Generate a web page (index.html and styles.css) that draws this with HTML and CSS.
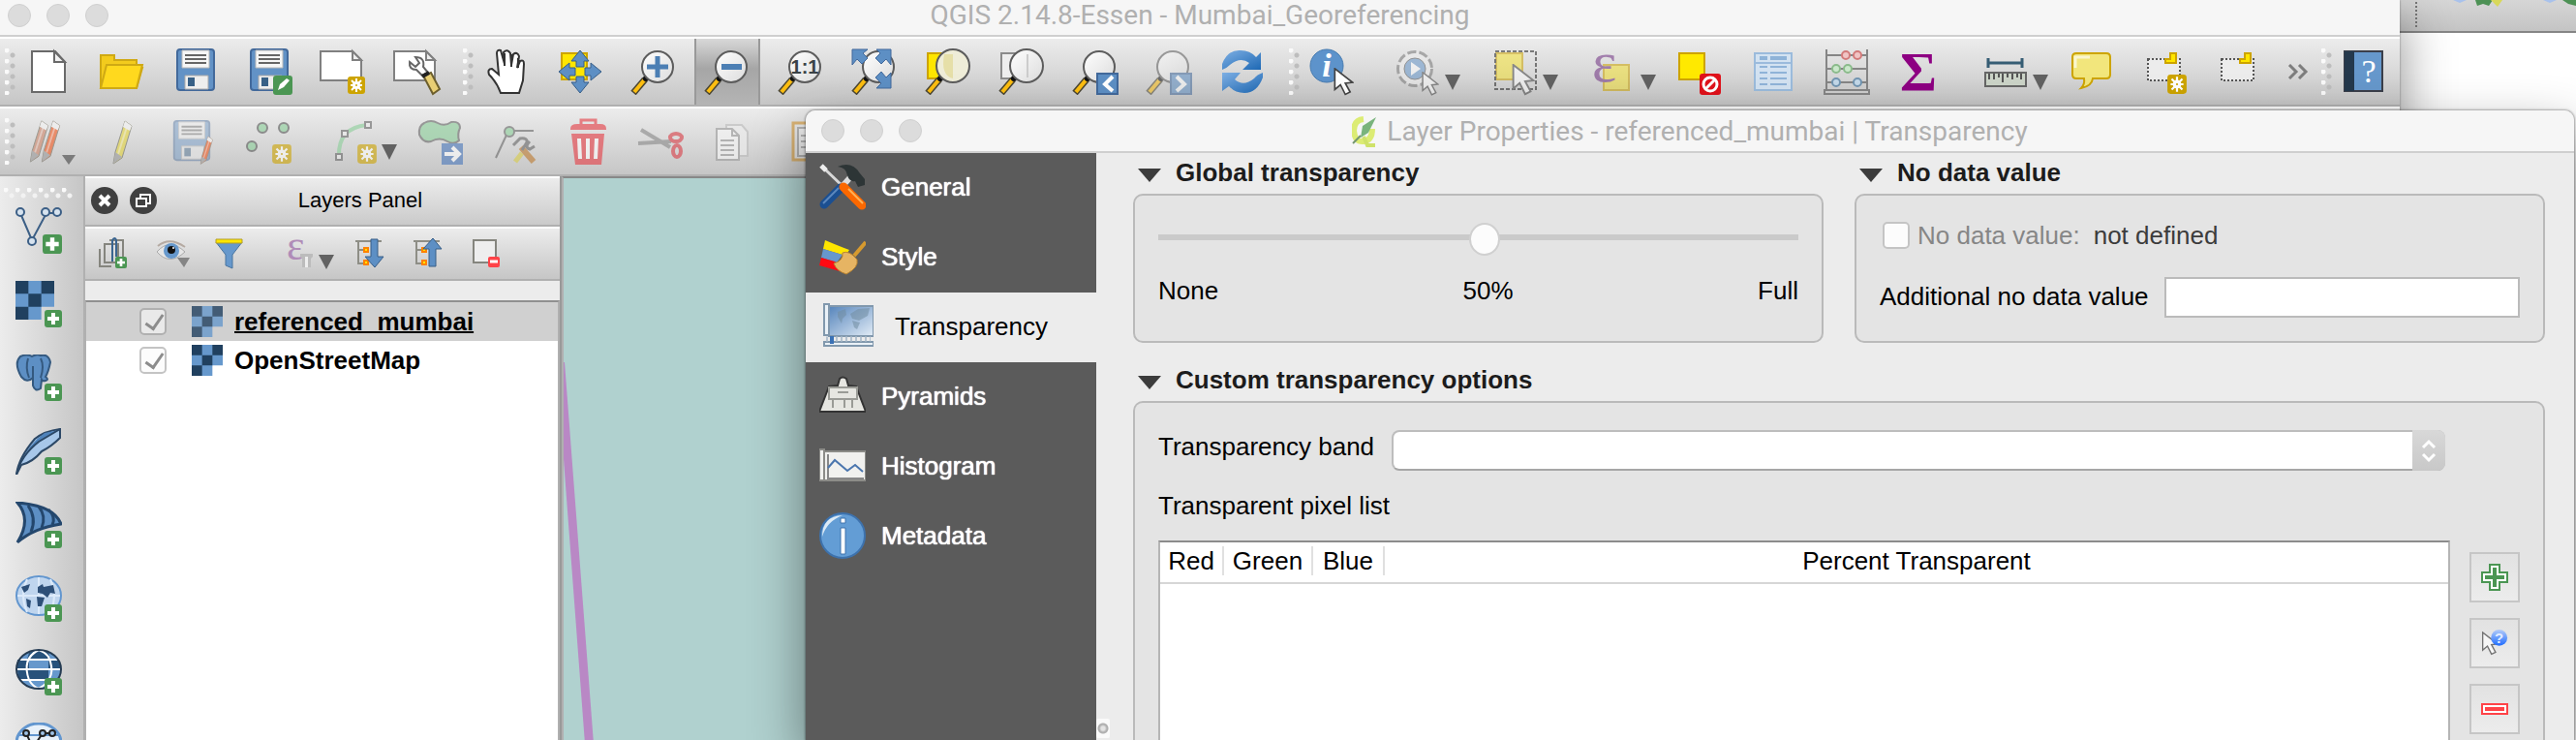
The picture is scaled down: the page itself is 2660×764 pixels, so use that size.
FILE: index.html
```html
<!DOCTYPE html>
<html lang="en">
<head>
<meta charset="utf-8">
<title>QGIS 2.14.8-Essen - Mumbai_Georeferencing</title>
<link rel="stylesheet" href="styles.css">
</head>
<body>
<svg class="defs" aria-hidden="true">
  <defs>
    <linearGradient id="lens" x1="0" y1="0" x2="1" y2="1"><stop offset="0" stop-color="#fff"/><stop offset="1" stop-color="#dcdcdc"/></linearGradient>
    <linearGradient id="blueball" x1="0" y1="0" x2="0" y2="1"><stop offset="0" stop-color="#b4ccf8"/><stop offset="1" stop-color="#1e6cff"/></linearGradient>
    <linearGradient id="sync" x1="0" y1="0" x2="1" y2="1"><stop offset="0" stop-color="#7fb0e4"/><stop offset="1" stop-color="#1d68b4"/></linearGradient>
    <linearGradient id="sea" x1="0" y1="0" x2="1" y2="1"><stop offset="0" stop-color="#5584bb"/><stop offset="1" stop-color="#e3edf7"/></linearGradient>
    <symbol id="handle" viewBox="0 0 48 48">
      <path d="M15 32L3 46" stroke="#4b4632" stroke-width="7"/><path d="M14 33L4 45" stroke="#fdbe10" stroke-width="4"/><circle cx="16" cy="31" r="3" fill="#111"/>
    </symbol>
    <symbol id="glass" viewBox="0 0 48 48">
      <use href="#handle"/><circle cx="28" cy="19" r="16" fill="url(#lens)" stroke="#5c5c5c" stroke-width="2"/>
    </symbol>
    <symbol id="plus" viewBox="0 0 18 18"><rect width="18" height="18" rx="3" fill="#4b9653"/><path d="M9 3v12M3 9h12" stroke="#fff" stroke-width="4"/></symbol>
    <symbol id="star" viewBox="0 0 20 20"><rect x="1" y="1" width="18" height="18" rx="3" fill="#cda400"/><path d="M10 3v14M4 10h12M5 5l10 10M15 5L5 15" stroke="#fff" stroke-width="2"/><circle cx="10" cy="10" r="4" fill="#fff"/><circle cx="10" cy="10" r="1" fill="#cda400"/></symbol>
    <symbol id="pencil" viewBox="0 0 20 48"><path d="M1 47L3 35L13 3L20 8L10 41Z" fill="currentColor" stroke="#6b6b5c" stroke-width="1"/><path d="M6 37L16 6" stroke="#fff" stroke-opacity=".45" stroke-width="2"/><path d="M13 3L20 8L18 13L11 9Z" fill="#f4f4f4"/><path d="M1 47L3 35L10 40Z" fill="#9b9b9b"/></symbol>
    <symbol id="disk" viewBox="0 0 48 48"><rect x="5" y="1" width="38" height="42" rx="3" fill="#6292c6" stroke="#42699b" stroke-width="2"/><path d="M10 2h28v18H10z" fill="#f6f6f6" stroke="#b9b9b9"/><path d="M13 7h22M13 11h22M13 15h22" stroke="#666" stroke-width="2"/><path d="M13 28h24v14H13z" fill="#eee" stroke="#aaa"/><path d="M16 30h7v9h-7z" fill="#386086"/></symbol>
    <symbol id="raster" viewBox="0 0 36 36"><path fill="#6698cc" d="M0 0h36v24H24v12H0z"/><path fill="#20405f" d="M0 0h12v12H0zM24 0h12v12H24zM12 12h12v12H12zM0 24h12v12H0z"/></symbol>
    <symbol id="cursor" viewBox="0 0 24 36"><path d="M1 1L1 27L8 21L14 33L20 30L14 19L23 18Z" fill="#fff" stroke="#444" stroke-width="2"/></symbol>
    <symbol id="tri" viewBox="0 0 16 16"><path d="M0 0h16L8 16z" fill="#626262"/></symbol>
  </defs>
</svg>

<div class="desktop">
  <div class="backdrop">
    <svg width="182" height="8"><path d="M55 0h14l-7 3z" fill="#a9c2ec"/><path d="M78 0h18l-4 6l-6-2l-6 2z" fill="#4d9155"/><path d="M94 0h12l-5 7z" fill="#d8d85a"/><path d="M148 0h14l-7 3z" fill="#a9c2ec"/><path d="M168 0h14v6l-8-2z" fill="#4d9155"/></svg>
  </div>

  <main class="window">
    <header class="titlebar">
      <div class="lights"><button aria-label="Close"></button><button aria-label="Minimize"></button><button aria-label="Zoom"></button></div>
      <h1 class="title">QGIS 2.14.8-Essen - Mumbai_Georeferencing</h1>
    </header>

    <nav class="toolbar" aria-label="Project and navigation">
      <span class="grip"></span>
      <div class="tools">
        <button class="tool" aria-label="New project"><svg viewBox="0 0 48 48"><path d="M7 3h24l10 11v31H7z" fill="#fff" stroke="#6a6a6a" stroke-width="2"/><path d="M30 3v11h11z" fill="#f0f0f0" stroke="#6a6a6a" stroke-width="2"/></svg></button>
        <button class="tool" aria-label="Open project"><svg viewBox="0 0 48 48"><path d="M2 41V7h14v5h23v8h6l-6 21z" fill="#f3cb1d" stroke="#cfa914" stroke-width="2"/><path d="M8 17h37l-6 24H2z" fill="#ffd91e" stroke="#cfa914" stroke-width="2"/></svg></button>
        <button class="tool" aria-label="Save project"><svg viewBox="0 0 48 48"><use href="#disk"/></svg></button>
        <button class="tool" aria-label="Save project as"><svg viewBox="0 0 48 48"><use href="#disk"/><rect x="28" y="28" width="20" height="20" rx="3" fill="#4b9653"/><path d="M33 43l2-6l7-6l3 2l-6 7z" fill="#fff"/></svg></button>
        <button class="tool" aria-label="New print composer"><svg viewBox="0 0 48 48"><path d="M1 3h33l9 9v21H1z" fill="#fff" stroke="#808080" stroke-width="2"/><path d="M34 3v9h9z" fill="#eee" stroke="#808080" stroke-width="2"/><use href="#star" x="28" y="28" width="20" height="20"/></svg></button>
        <button class="tool" aria-label="Composer manager"><svg viewBox="0 0 48 48"><path d="M1 3h33l9 9v21H1z" fill="#fff" stroke="#808080" stroke-width="2"/><path d="M34 3v9h9z" fill="#eee" stroke="#808080" stroke-width="2"/><path d="M31 28l8-3l9 17l-7 5z" fill="#e9cf74" stroke="#6d5f2d" stroke-width="2"/><path d="M30 28l-6-6q-8 0-7-8l6 5l4-4l-4-6q10 0 8 10l5 6z" fill="#fff" stroke="#666" stroke-width="2"/><path d="M30 29l7-4" stroke="#222" stroke-width="4"/></svg></button>
      </div>
      <span class="grip"></span>
      <div class="tools">
        <button class="tool" aria-label="Pan map"><svg viewBox="0 0 48 48"><path d="M18 46Q14 35 6 27Q4 21 9 21L16 27L14 5Q14 1 18 2L22 16L21 4Q25 0 28 5L29 17L31 6Q35 3 37 8L35 20L38 13Q42 11 42 16L41 33L37 46Z" fill="#fff" stroke="#333" stroke-width="2"/><path d="M22 5v13M29 6v13M36 10v10" stroke="#333" stroke-width="2"/></svg></button>
        <button class="tool" aria-label="Pan to selection"><svg viewBox="0 0 48 48"><path d="M5 5h26v27H5z" fill="#ffe600" stroke="#cda400" stroke-width="2"/><path d="M24 2l9 11h-5v6h-8v-6h-5zM24 46l9-11h-5v-6h-8v6h-5zM2 24l11-9v5h6v8h-6v5zM46 24l-11-9v5h-6v8h6v5z" fill="#5d8fc4" stroke="#385e87"/></svg></button>
        <button class="tool" aria-label="Zoom in"><svg viewBox="0 0 48 48"><use href="#glass"/><path d="M28 8v22M17 19h22" stroke="#4c7fb4" stroke-width="5"/></svg></button>
        <button class="tool active" aria-label="Zoom out" aria-pressed="true"><svg viewBox="0 0 48 48"><use href="#glass"/><path d="M18 19h21" stroke="#4c7fb4" stroke-width="6"/></svg></button>
        <button class="tool" aria-label="Zoom to native resolution"><svg viewBox="0 0 48 48"><use href="#glass"/><text x="28" y="26" text-anchor="middle" class="glyph-ratio">1:1</text></svg></button>
        <button class="tool" aria-label="Zoom full"><svg viewBox="0 0 48 48"><use href="#glass"/><path d="M1 1h16l-5 4l5 5l-6 6l-5-5l-5 6zM41 1H26l4 4l-5 5l6 6l5-5l5 6zM41 41H26l5-5l-6-6l6-6l5 6l5-5z" fill="#5d8fc4" stroke="#42699b"/></svg></button>
        <button class="tool" aria-label="Zoom to selection"><svg viewBox="0 0 48 48"><path d="M3 5h26v26H3z" fill="#ffe600" stroke="#cda400" stroke-width="2"/><use href="#handle"/><circle cx="29" cy="18" r="17" fill="#efedd8" stroke="#5c5c5c" stroke-width="2"/><path d="M20 6h9v25q-13-3-9-25z" fill="#e6dfa8"/></svg></button>
        <button class="tool" aria-label="Zoom to layer"><svg viewBox="0 0 48 48"><path d="M3 5h26v26H3z" fill="#eee" stroke="#8b8b8b" stroke-width="2"/><use href="#handle"/><circle cx="29" cy="18" r="17" fill="url(#lens)" stroke="#5c5c5c" stroke-width="2"/><path d="M30 6v24" stroke="#ccc" stroke-width="2"/></svg></button>
        <button class="tool" aria-label="Zoom last"><svg viewBox="0 0 48 48"><use href="#glass"/><path d="M26 26h21v21H26z" fill="#5d8fc4" stroke="#42699b" stroke-width="2"/><path d="M42 29l-8 8l8 7" fill="none" stroke="#fff" stroke-width="4"/></svg></button>
        <button class="tool dim" aria-label="Zoom next"><svg viewBox="0 0 48 48"><use href="#glass"/><path d="M26 26h21v21H26z" fill="#5d8fc4" stroke="#42699b" stroke-width="2"/><path d="M32 29l8 8l-8 7" fill="none" stroke="#fff" stroke-width="4"/></svg></button>
        <button class="tool" aria-label="Refresh"><svg viewBox="0 0 48 48"><path d="M3 16Q9 1 22 2Q32 2 38 9L43 4V22H24L31 15Q22 8 11 17Q7 21 3 22Z" fill="url(#sync)"/><path d="M45 30Q39 46 26 46Q16 46 10 39L3 44V25H22L16 32Q25 40 36 31Q39 27 45 25Z" fill="url(#sync)"/></svg></button>
      </div>
      <span class="grip"></span>
      <div class="tools">
        <button class="tool" aria-label="Identify features"><svg viewBox="0 0 48 48"><circle cx="18" cy="18" r="17" fill="#5d93cb" stroke="#467bb0"/><text x="18" y="29" text-anchor="middle" class="glyph-i">i</text><use href="#cursor" x="25" y="20" width="21" height="30"/></svg></button>
        <button class="tool menu" aria-label="Run feature action"><svg class="faded" viewBox="0 0 48 48"><circle cx="21" cy="21" r="17" fill="#eee" stroke="#777" stroke-width="4" stroke-dasharray="9 3"/><circle cx="21" cy="21" r="16" fill="#eee"/><circle cx="21" cy="21" r="11" fill="#6898cb" stroke="#555"/><path d="M17 14l10 7l-10 7z" fill="#fff"/><use href="#cursor" x="28" y="24" width="18" height="26"/></svg><svg class="caret" viewBox="0 0 16 16"><use href="#tri"/></svg></button>
        <button class="tool menu" aria-label="Select features"><svg class="faded" viewBox="0 0 48 48"><path d="M4 5h27v27H4z" fill="#ffe600" fill-opacity=".75" stroke="#cda400" stroke-width="2"/><path d="M3 3h42v39H3z" fill="none" stroke="#222" stroke-width="2" stroke-dasharray="4 2"/><use href="#cursor" x="18" y="16" width="28" height="34"/></svg><svg class="caret" viewBox="0 0 16 16"><use href="#tri"/></svg></button>
        <button class="tool menu" aria-label="Select by expression"><svg class="faded" viewBox="0 0 48 48"><path d="M14 17h26v26H14z" fill="#ffe600" fill-opacity=".75" stroke="#cda400" stroke-width="2"/><text x="2" y="34" class="glyph-eps">ε</text></svg><svg class="caret" viewBox="0 0 16 16"><use href="#tri"/></svg></button>
        <button class="tool" aria-label="Deselect all"><svg viewBox="0 0 48 48"><path d="M3 5h26v27H3z" fill="#ffe900" stroke="#cda400" stroke-width="2"/><rect x="24" y="26" width="22" height="22" rx="3" fill="#e0121b"/><circle cx="35" cy="37" r="7" fill="none" stroke="#fff" stroke-width="3"/><path d="M30 42L40 32" stroke="#fff" stroke-width="3"/></svg></button>
        <button class="tool" aria-label="Open attribute table"><svg viewBox="0 0 48 48"><path d="M5 5h38v38H5z" fill="#d3e2f1" stroke="#9bbbdc" stroke-width="2"/><path d="M5 15h38" stroke="#9bbbdc" stroke-width="2"/><path d="M10 10h8M21 10h17" stroke="#8fb3d8" stroke-width="4"/><path d="M10 19h8M21 19h17M10 25h8M21 25h17M10 31h8M21 31h17M10 37h8M21 37h17" stroke="#8fb3d8" stroke-width="2"/></svg></button>
        <button class="tool" aria-label="Field calculator"><svg viewBox="0 0 48 48"><path d="M3 1v42M45 1v42M3 7h42M3 21h42M3 35h42M1 43h46v4H1z" fill="none" stroke="#858585" stroke-width="2"/><g stroke-width="2"><g fill="#f0c4c4" stroke="#d27a7a"><circle cx="23" cy="7" r="4"/><circle cx="35" cy="7" r="4"/></g><g fill="#cbe8cb" stroke="#8bbb8b"><circle cx="13" cy="21" r="4"/><circle cx="25" cy="21" r="4"/></g><g fill="#c4d9e9" stroke="#7295b1"><circle cx="13" cy="35" r="4"/><circle cx="35" cy="35" r="4"/></g></g></svg></button>
        <button class="tool" aria-label="Statistical summary"><svg viewBox="0 0 48 48"><text x="22" y="44" text-anchor="middle" class="glyph-sum">Σ</text></svg></button>
        <button class="tool menu" aria-label="Measure line"><svg viewBox="0 0 48 48"><path d="M6 10v10M41 10v10M6 15h35" stroke="#365d74" stroke-width="3"/><path d="M3 25h42v14H3z" fill="#ccd4c8" stroke="#666" stroke-width="2"/><path d="M7 26v6M12 26v6M17 26v4M21 26v9M26 26v4M31 26v6M36 26v4M40 26v6" stroke="#555" stroke-width="2"/></svg><svg class="caret" viewBox="0 0 16 16"><use href="#tri"/></svg></button>
        <button class="tool" aria-label="Map tips"><svg viewBox="0 0 48 48"><path d="M8 5h31q4 0 4 4v18q0 4-4 4H25q-1 8-12 10q4-4 3-10H8q-4 0-4-4V9q0-4 4-4z" fill="#f2e67c" stroke="#cda400" stroke-width="2"/><path d="M7 20V9h15" fill="none" stroke="#faf6cf" stroke-width="3"/></svg></button>
        <button class="tool" aria-label="New bookmark"><svg viewBox="0 0 48 48"><path d="M6 11h33v22H6z" fill="#ececec" stroke="#555" stroke-width="2" stroke-dasharray="2 2"/><path d="M24 11h5V5h6v10h-11z" fill="#ffe600" stroke="#cda400" stroke-width="2"/><use href="#star" x="25" y="26" width="22" height="22"/></svg></button>
        <button class="tool" aria-label="Show bookmarks"><svg viewBox="0 0 48 48"><path d="M6 11h33v22H6z" fill="#ececec" stroke="#555" stroke-width="2" stroke-dasharray="2 2"/><path d="M25 11h5V5h6v10h-11z" fill="#ffe600" stroke="#cda400" stroke-width="2"/></svg></button>
        <button class="more" aria-label="More tools"><svg viewBox="0 0 22 16"><path d="M2 1l7 7l-7 7M12 1l7 7l-7 7" fill="none" stroke="#7d7d7d" stroke-width="3"/></svg></button>
      </div>
      <span class="grip tight"></span>
      <div class="tools">
        <button class="tool" aria-label="Help"><svg viewBox="0 0 48 48"><path d="M3 3h39v41H3z" fill="#6698cc" stroke="#3b3f4a" stroke-width="2"/><path d="M3 3h10v41H3z" fill="#24384c"/><text x="28" y="35" text-anchor="middle" class="glyph-help">?</text></svg></button>
      </div>
    </nav>

    <nav class="toolbar" aria-label="Digitizing">
      <span class="grip"></span>
      <div class="tools">
        <button class="tool" aria-label="Current edits"><svg class="dimmed" viewBox="0 0 48 48"><use href="#pencil" x="3" width="22" height="46" color="#cc8468"/><use href="#pencil" x="14" width="24" height="46" color="#f0571e"/><path d="M38 38h14l-7 10z" fill="#444"/></svg></button>
        <button class="tool" aria-label="Toggle editing"><svg class="dimmed" viewBox="0 0 48 48"><use href="#pencil" x="12" width="24" height="48" color="#e5d53c"/></svg></button>
        <button class="tool" aria-label="Save layer edits"><svg class="dimmed" viewBox="0 0 48 48"><g opacity=".7"><use href="#disk" x="-3" y="2" width="46" height="46"/></g><use href="#pencil" x="26" y="17" width="18" height="31" color="#f0571e"/></svg></button>
        <button class="tool" aria-label="Add feature"><svg class="dimmed" viewBox="0 0 48 48"><g fill="#8bcf99" stroke="#555" stroke-width="2"><circle cx="17" cy="10" r="5"/><circle cx="39" cy="10" r="5"/><circle cx="6" cy="29" r="5"/></g><use href="#star" x="26" y="26" width="22" height="22"/></svg></button>
        <button class="tool menu" aria-label="Add circular string"><svg class="dimmed" viewBox="0 0 48 48"><path d="M8 39Q7 10 37 7" fill="none" stroke="#8bcf99" stroke-width="4"/><g fill="#eee" stroke="#666" stroke-width="2"><path d="M5 37h6v6H5zM11 13h6v6h-6zM35 4h6v6h-6z"/></g><use href="#star" x="26" y="26" width="22" height="22"/></svg><svg class="caret" viewBox="0 0 16 16"><use href="#tri"/></svg></button>
        <button class="tool" aria-label="Move feature"><svg class="dimmed" viewBox="0 0 48 48"><path d="M7 5Q14 1 21 5T35 4Q44 3 44 10Q41 16 43 23Q38 28 31 24Q23 19 14 24Q6 26 2 17Q1 8 7 5Z" fill="#8bcf99" stroke="#666" stroke-width="2"/><path d="M25 26h22v22H25z" fill="#4876ba"/><path d="M28 37h14M36 30l7 7l-7 7" fill="none" stroke="#fff" stroke-width="4"/></svg></button>
        <button class="tool" aria-label="Node tool"><svg class="dimmed" viewBox="0 0 48 48"><path d="M5 41L18 13H44" fill="none" stroke="#666" stroke-width="2"/><circle cx="19" cy="14" r="5" fill="#8bcf99" stroke="#666" stroke-width="2"/><path d="M25 45l7-9" stroke="#d8cc48" stroke-width="5"/><path d="M31 30l13 15" stroke="#bd7a2f" stroke-width="6"/><path d="M23 28l7-7q8-1 7 4l-5 8M40 24q-6 6 0 8l5-3" fill="none" stroke="#666" stroke-width="3"/></svg></button>
        <button class="tool" aria-label="Delete selected"><svg class="dimmed" viewBox="0 0 48 48"><path d="M6 11q0-5 7-5h24q6 0 6 5v1H6z" fill="#e63a42"/><path d="M17 6V2h15v4" fill="none" stroke="#e63a42" stroke-width="3"/><path d="M7 16h34l-3 32H11z" fill="#e63a42"/><path d="M15 21l1 21M24 21v21M33 21l-1 21" stroke="#fff" stroke-width="4"/></svg></button>
        <button class="tool" aria-label="Cut features"><svg class="dimmed" viewBox="0 0 48 48"><path d="M3 12l30 18M0 26l34-2" stroke="#888" stroke-width="4"/><g fill="none" stroke="#d93c45" stroke-width="4"><ellipse cx="39" cy="20" rx="6" ry="4"/><ellipse cx="40" cy="34" rx="4" ry="6"/></g></svg></button>
        <button class="tool" aria-label="Copy features"><svg class="dimmed" viewBox="0 0 48 48"><path d="M15 7h16l6 7v25H15z" fill="#eee" stroke="#bbb" stroke-width="2"/><path d="M5 11h16l7 7v25H5z" fill="#f8f8f8" stroke="#999" stroke-width="2"/><path d="M21 11v7h7M9 23h14M9 28h14M9 33h14M9 38h14" fill="none" stroke="#999" stroke-width="2"/></svg></button>
        <button class="tool" aria-label="Paste features"><svg class="dimmed" viewBox="0 0 48 48"><path d="M8 5h34v38H8z" fill="#eee" stroke="#d6962e" stroke-width="3"/><path d="M13 10h24v29H13z" fill="#f8f8f8" stroke="#999" stroke-width="2"/><path d="M16 18h16M16 24h16M16 30h16" stroke="#999" stroke-width="2"/></svg></button>
      </div>
    </nav>

    <div class="workspace">
      <nav class="rail" aria-label="Manage layers">
        <span class="grip-wide"></span>
        <button class="rail-tool" aria-label="Add vector layer"><svg viewBox="0 0 48 48"><path d="M5 6l12 28L32 6h10" fill="none" stroke="#3c5f86" stroke-width="2"/><g fill="#d7e3ef" stroke="#3c5f86" stroke-width="2"><circle cx="5" cy="5" r="4"/><circle cx="17" cy="35" r="4"/><circle cx="31" cy="5" r="4"/><circle cx="43" cy="5" r="4"/></g><use href="#plus" x="28" y="28" width="20" height="20"/></svg></button>
        <button class="rail-tool" aria-label="Add raster layer"><svg viewBox="0 0 48 48"><use href="#raster" width="40" height="40"/><use href="#plus" x="30" y="30" width="18" height="18"/></svg></button>
        <button class="rail-tool" aria-label="Add PostGIS layer"><svg viewBox="0 0 48 48"><path d="M5 2Q12-1 17 2Q22-1 26 1Q34-1 36 8Q34 18 31 23Q35 26 31 27Q28 28 27 26L26 35Q20 39 18 32V24Q12 30 6 23Q-2 9 5 2Z" fill="#5d8fc4" stroke="#34597f" stroke-width="2"/><path d="M13 4Q10 14 14 24M18 12v14M26 4Q30 12 26 24" fill="none" stroke="#34597f" stroke-width="2"/><use href="#plus" x="30" y="30" width="18" height="18"/></svg></button>
        <button class="rail-tool" aria-label="Add SpatiaLite layer"><svg viewBox="0 0 48 48"><path d="M1 48Q3 31 20 11Q30 3 46 1V10Q37 19 27 24Q18 35 6 38Z" fill="#a7c7e9" stroke="#2c4866" stroke-width="2"/><path d="M4 38Q16 16 45 2L30 5Q14 16 4 38Z" fill="#4f83bb"/><path d="M1 48Q5 29 24 14L46 1" fill="none" stroke="#2c4866" stroke-width="2"/><use href="#plus" x="30" y="30" width="18" height="18"/></svg></button>
        <button class="rail-tool" aria-label="Add MSSQL layer"><svg viewBox="0 0 48 48"><path d="M2 1Q40 4 47 23Q19 27 2 42Q17 18 2 1Z" fill="#5d8fc4" stroke="#24476d" stroke-width="3"/><path d="M13 4Q22 17 16 31M24 5Q32 15 27 27M34 8Q42 16 38 24" fill="none" stroke="#24476d" stroke-width="3"/><use href="#plus" x="30" y="30" width="18" height="18"/></svg></button>
        <button class="rail-tool" aria-label="Add WMS layer"><svg viewBox="0 0 48 48"><ellipse cx="24" cy="21" rx="23" ry="20" fill="#bfd5ee" stroke="#6296cf" stroke-width="2"/><path d="M2 21h44M24 2v38M12 4Q4 21 12 38M36 4Q44 21 36 38" fill="none" stroke="#dceafa" stroke-width="2"/><path d="M6 12l9-3l-2 6l-4 3zM11 24l5 2l-1 8l-3-2zM23 12l5-3l1 3l10-2l2 9l-5-1l-3 5l-5-4l-5-1zM22 22l8 1l-3 9h-4z" fill="#2d4f78"/><use href="#plus" x="30" y="30" width="18" height="18"/></svg></button>
        <button class="rail-tool" aria-label="Add WCS layer"><svg viewBox="0 0 48 48"><ellipse cx="24" cy="21" rx="23" ry="20" fill="#6698cc"/><path d="M14 4Q24-2 34 4L36 11H12zM2 22h12v10H4zM14 22h20v10H14zM2 11h12v10H1zM34 11h11l2 10H34z" fill="#28527b"/><path d="M1 21h46M4 11h40M4 32h40M24 1Q6 10 14 32Q18 39 24 41Q44 30 34 8Q30 3 24 1" fill="none" stroke="#fff" stroke-width="2"/><ellipse cx="24" cy="21" rx="23" ry="20" fill="none" stroke="#263c53" stroke-width="2"/><use href="#plus" x="30" y="30" width="18" height="18"/></svg></button>
        <button class="rail-tool" aria-label="Add WFS layer"><svg viewBox="0 0 48 48"><ellipse cx="24" cy="21" rx="23" ry="20" fill="#e8f1fa" stroke="#6296cf" stroke-width="3"/><path d="M2 13h44" stroke="#6296cf" stroke-width="2"/><path d="M11 11l7 15L28 11h11" fill="none" stroke="#222" stroke-width="2"/><g fill="#9fc3e8" stroke="#222" stroke-width="2"><circle cx="11" cy="11" r="3"/><circle cx="28" cy="11" r="3"/><circle cx="38" cy="11" r="3"/></g></svg></button>
      </nav>

      <section class="layers" aria-labelledby="layers-title">
        <header class="layers-head">
          <button class="round" aria-label="Close panel"><svg viewBox="0 0 28 28"><circle cx="14" cy="14" r="14" fill="#404040"/><path d="M9 9l10 10M19 9L9 19" stroke="#fff" stroke-width="4"/></svg></button>
          <button class="round" aria-label="Float panel"><svg viewBox="0 0 28 28"><circle cx="14" cy="14" r="14" fill="#404040"/><path d="M11 11V8h10v9h-3M7 12h10v8H7z" fill="none" stroke="#fff" stroke-width="2"/></svg></button>
          <h2 id="layers-title">Layers Panel</h2>
        </header>
        <div class="layers-tools">
          <button aria-label="Add group"><svg viewBox="0 0 32 32"><path d="M2 12v18h12M7 7h14v19H7zM12 3h14v20" fill="none" stroke="#85857e" stroke-width="2"/><path d="M15 25V3q3-4 4 0v17" fill="none" stroke="#3b6590" stroke-width="2"/><use href="#plus" x="18" y="20" width="12" height="12"/></svg></button>
          <button aria-label="Manage visibility"><svg viewBox="0 0 32 32"><path d="M1 15Q14 0 30 15Q14 30 1 15Z" fill="#e6e6e6" stroke="#aaa"/><path d="M2 9Q14-1 30 10" fill="none" stroke="#b5aaa2" stroke-width="2"/><circle cx="16" cy="14" r="8" fill="#6698cc"/><circle cx="16" cy="13" r="4" fill="#111"/><circle cx="18" cy="11" r="1" fill="#fff"/><path d="M22 21h13l-6 10z" fill="#858585"/></svg></button>
          <button aria-label="Filter legend"><svg viewBox="0 0 32 32"><path d="M2 5L12 18V29L19 32V18L29 5Z" fill="#6698cc" stroke="#49749f"/><path d="M2 2h27v4H2z" fill="#ffe600" stroke="#b39e28"/></svg></button>
          <button class="wide" aria-label="Filter by expression"><svg viewBox="0 0 52 32"><text x="1" y="23" class="glyph-eps-small">ε</text><path d="M15 17h13v3l-2 2v9h-9v-9l-2-2z" fill="#bcbcbc"/><path d="M20 20h3v11h-3z" fill="#eee"/><path d="M34 18h16l-8 15z" fill="#626262"/></svg></button>
          <button aria-label="Expand all"><svg viewBox="0 0 32 32"><path d="M1 4h27M4 4v24M4 13h8M4 27h8" fill="none" stroke="#8e8e86" stroke-width="2"/><path d="M10 11h4v4h-4zM10 24h4v4h-4z" fill="#ffe600" stroke="#ff8200" stroke-width="2"/><path d="M17 2h7v18h6l-9 11l-10-11h6z" fill="#5d8fc4" stroke="#385e87"/></svg></button>
          <button aria-label="Collapse all"><svg viewBox="0 0 32 32"><path d="M1 4h27M4 4v24M4 13h8M4 27h8" fill="none" stroke="#8e8e86" stroke-width="2"/><path d="M10 11h4v4h-4zM10 24h4v4h-4z" fill="#ffe600" stroke="#ff8200" stroke-width="2"/><path d="M17 30h7V12h6L21 1L11 12h6z" fill="#5d8fc4" stroke="#385e87"/></svg></button>
          <button aria-label="Remove layer"><svg viewBox="0 0 32 32"><path d="M3 3h23v23H3z" fill="#eee" stroke="#85857e" stroke-width="2"/><rect x="18" y="20" width="12" height="11" rx="2" fill="#ff4348"/><path d="M20 25h8" stroke="#fff" stroke-width="3"/></svg></button>
        </div>
        <ul class="tree">
          <li class="selected"><label><input type="checkbox" class="check" checked><svg class="layer-icon soft" viewBox="0 0 36 36"><use href="#raster"/></svg><span class="underlined">referenced_mumbai</span></label></li>
          <li><label><input type="checkbox" class="check" checked><svg class="layer-icon" viewBox="0 0 36 36"><use href="#raster"/></svg><span>OpenStreetMap</span></label></li>
        </ul>
      </section>

      <section class="map" aria-label="Map canvas">
        <svg width="40" height="584"><path d="M0 190L1 190L31 584H22L0 290Z" fill="#b988c5"/></svg>
      </section>
    </div>
  </main>

  <section class="dialog" role="dialog" aria-labelledby="dialog-title">
    <header class="titlebar">
      <div class="lights"><button aria-label="Close"></button><button aria-label="Minimize"></button><button aria-label="Zoom"></button></div>
      <h2 class="title" id="dialog-title"><svg viewBox="0 0 26 32"><path d="M12 3Q2 4 2 15Q3 27 12 26Q21 25 21 13" fill="none" stroke="#dcec74" stroke-width="6"/><path d="M12 21l4 9l8 0" fill="none" stroke="#cfe26a" stroke-width="4"/><path d="M25 1L11 10L9 22L17 17Z" fill="#79b47c"/><path d="M9 20L1 28" stroke="#74966f" stroke-width="2"/></svg>Layer Properties - referenced_mumbai | Transparency</h2>
    </header>
    <div class="dialog-body">
      <nav class="tabs" aria-label="Layer properties pages">
        <button class="tab"><svg viewBox="0 0 48 48"><path d="M3 3l23 22" stroke="#d8d8d8" stroke-width="3"/><path d="M2 2l5 5" stroke="#eee" stroke-width="5"/><path d="M24 23L33 13" stroke="#ddd" stroke-width="6"/><path d="M19 3Q34-3 42 10L47 16V22L40 24L37 18Q31 19 29 12Q28 4 19 3Z" fill="#2d3536"/><path d="M22 25L5 42" stroke="#1b4f91" stroke-width="9" stroke-linecap="round"/><path d="M20 25L4 41" stroke="#5c88bd" stroke-width="2"/><path d="M25 24L44 43" stroke="#fb6800" stroke-width="9" stroke-linecap="round"/><path d="M30 26L45 41" stroke="#ffb255" stroke-width="2"/></svg>General</button>
        <button class="tab"><svg viewBox="0 0 48 48"><path d="M6 7Q20 13 31 17L27 23L4 16Z" fill="#ffe600"/><path d="M4 16L24 22L18 30L2 25Z" fill="#6698cc"/><path d="M2 25L16 29L28 41L0 33Z" fill="#ff0a12"/><path d="M48 9L36 23" stroke="#d69a2f" stroke-width="4"/><path d="M15 31Q25 28 24 20Q31 17 39 27Q41 35 28 42Q18 39 15 31Z" fill="#e6b463" stroke="#b98431"/></svg>Style</button>
        <button class="tab current" aria-current="page"><svg viewBox="0 0 52 48"><path d="M6 3h46v31H6z" fill="url(#sea)" stroke="#8198ad" stroke-width="2"/><path d="M1 1h5v32H1zM1 40h51v4H1z" fill="#eaf1f7" stroke="#8198ad" stroke-width="2"/><path d="M15 9l8-3l1 6l-4 4l-1 5l-4-7zM28 11l8-5l12-1l-2 8l-9 5l-7-2zM30 18l8 2l-3 7l-3-2z" fill="#718da0" opacity=".55"/><path d="M3 37h46" stroke="#b4c2cf" stroke-width="5" stroke-dasharray="2 3"/><path d="M7 34h4v8H7z" fill="#3a71b5"/></svg>Transparency</button>
        <button class="tab"><svg viewBox="0 0 48 48"><path d="M10 14L0 40H48L38 14L30 13L28 6Q24 3 21 6L19 13Z" fill="#e6e6e1" stroke="#333" stroke-width="2"/><path d="M10 15h29v12H10zM14 27v9M34 27v9M19 20h11M26 27v9" fill="none" stroke="#9a9b96" stroke-width="2"/></svg>Pyramids</button>
        <button class="tab"><svg viewBox="0 0 48 48"><path d="M0 7h5v32H0zM5 9h43v30H5z" fill="#f1f1ef" stroke="#8c8c88" stroke-width="2"/><path d="M9 12v25h37" fill="none" stroke="#888" stroke-width="2"/><path d="M9 26L16 18L29 29L37 23L45 30" fill="none" stroke="#4b76ae" stroke-width="2"/></svg>Histogram</button>
        <button class="tab"><svg viewBox="0 0 48 48"><circle cx="24" cy="24" r="23" fill="#639dd5" stroke="#3d72ad" stroke-width="2"/><path d="M3 25Q3 4 24 3Q8 9 3 25Z" fill="#dceaf6"/><path d="M22 6h5v5h-5zM22 16h5v27h-5z" fill="#fff" stroke="#3d72ad"/></svg>Metadata</button>
      </nav>

      <div class="page">
        <section class="group">
          <h3><svg viewBox="0 0 24 16"><path d="M0 1h24L12 15z" fill="#3c3c3c"/></svg>Global transparency</h3>
          <div class="box">
            <input class="slider" type="range" min="0" max="100" value="51" aria-label="Global transparency">
            <div class="scale"><span>None</span><output>50%</output><span>Full</span></div>
          </div>
        </section>
        <section class="group">
          <h3><svg viewBox="0 0 24 16"><path d="M0 1h24L12 15z" fill="#3c3c3c"/></svg>No data value</h3>
          <div class="box nodata">
            <div class="line"><input type="checkbox" class="check" id="nodata" disabled><label for="nodata" class="muted">No data value:</label><span class="undefined">not defined</span></div>
            <div class="line extra"><label for="additional">Additional no data value</label><input id="additional" type="text" class="field"></div>
          </div>
        </section>
        <section class="group custom">
          <h3><svg viewBox="0 0 24 16"><path d="M0 1h24L12 15z" fill="#3c3c3c"/></svg>Custom transparency options</h3>
          <div class="box options">
            <div class="line band"><label for="band">Transparency band</label>
              <div class="select"><select id="band"><option></option></select><svg viewBox="0 0 34 42"><path d="M11 18l6-6l6 6M11 25l6 6l6-6" fill="none" stroke="#fff" stroke-width="3"/></svg></div>
            </div>
            <h4>Transparent pixel list</h4>
            <div class="list">
              <div class="frame">
                <table>
                  <colgroup><col class="red"><col class="green"><col class="blue"><col></colgroup>
                  <thead><tr><th><span>Red</span></th><th><span>Green</span></th><th><span>Blue</span></th><th><span>Percent Transparent</span></th></tr></thead>
                </table>
              </div>
              <div class="actions">
                <button aria-label="Add values manually"><svg viewBox="0 0 28 28"><path d="M9 1h10v8h8v10h-8v8H9v-8H1V9h8z" fill="#fff" stroke="#4b9653" stroke-width="2"/><path d="M14 4v20M4 14h20" stroke="#4b9653" stroke-width="4"/></svg></button>
                <button aria-label="Add values from display"><svg viewBox="0 0 28 30"><g opacity=".7"><use href="#cursor" x="0" y="2" width="18" height="28"/></g><circle cx="19" cy="9" r="9" fill="url(#blueball)"/><text x="19" y="15" text-anchor="middle" class="glyph-q">?</text></svg></button>
                <button aria-label="Remove selected row"><svg viewBox="0 0 28 28"><path d="M1 9h26v10H1z" fill="#fff" stroke="#ff4348" stroke-width="2"/><path d="M4 14h20" stroke="#ff4348" stroke-width="4"/></svg></button>
              </div>
            </div>
          </div>
        </section>
      </div>
      <span class="splitter"></span>
    </div>
  </section>
</div>
</body>
</html>
```
FILE: styles.css
```css
* { box-sizing: border-box; }

body {
  margin: 0;
  font-family: "Liberation Sans", Arial, sans-serif;
  font-size: 26px;
  line-height: 30px;
  color: #000;
}

h1, h2, h3, h4, ul { margin: 0; padding: 0; font-size: inherit; font-weight: inherit; }
button { padding: 0; border: 0; background: none; font: inherit; }
svg { display: block; flex: none; }
.defs { position: absolute; width: 0; height: 0; }

.desktop { position: relative; height: 100vh; overflow: hidden; background: #fff; }

.backdrop {
  position: absolute;
  top: 0;
  right: 0;
  width: 182px;
  height: 34px;
  background: linear-gradient(#d6d6d6, #c4c4c4);
  border-bottom: 2px solid #868686;
}
.backdrop::before {
  content: "";
  position: absolute;
  left: 16px;
  top: 2px;
  height: 26px;
  border-left: 2px dotted #777;
}

/* Windows */
.window {
  position: relative;
  display: flex;
  flex-direction: column;
  height: 100%;
  margin-right: 182px;
  background: #ececec;
  box-shadow: 0 0 2px rgba(0, 0, 0, .4), 0 20px 50px rgba(0, 0, 0, .45);
}
.dialog {
  position: absolute;
  top: 114px;
  left: 832px;
  right: 2px;
  bottom: 0;
  display: flex;
  flex-direction: column;
  border-radius: 10px 10px 0 0;
  background: #ececec;
  box-shadow: 0 0 2px 1px rgba(0, 0, 0, .3), 0 24px 56px rgba(0, 0, 0, .45);
}
.titlebar {
  position: relative;
  flex: none;
  display: flex;
  align-items: center;
  justify-content: center;
  height: 38px;
  background: #f6f6f6;
  border-bottom: 2px solid #cfcfcf;
}
.dialog .titlebar { height: 44px; border-radius: 10px 10px 0 0; }
.title { display: flex; align-items: center; gap: 10px; font-family: Roboto, sans-serif; font-size: 28px; color: #b0b0b0; white-space: nowrap; }
.title svg { width: 26px; height: 32px; }
.window > .titlebar { padding-bottom: 4px; }
.dialog .title { padding-top: 2px; }
.lights { position: absolute; left: 8px; display: flex; gap: 16px; }
.dialog .lights { left: 16px; }
.lights button { width: 24px; height: 24px; border-radius: 50%; background: #dcdcdc; border: 1px solid #d0d0d0; }

/* Toolbars */
.toolbar {
  flex: none;
  display: flex;
  align-items: center;
  height: 72px;
  padding-left: 5px;
  border-top: 2px solid #fff;
  border-bottom: 2px solid #b0b0b0;
  background: linear-gradient(#ececec, #c6c6c6);
}
.tools { display: flex; align-items: center; gap: 8px; }
.tool { display: flex; flex: none; align-items: center; justify-content: center; width: 68px; height: 68px; }
.tool svg { width: 48px; height: 48px; overflow: visible; }
.tool.menu { width: 93px; gap: 4px; justify-content: flex-start; padding-left: 22px; }
.tool .caret { width: 16px; height: 16px; margin-top: 22px; }
.tool.active { background: linear-gradient(#d8d8d8, #a6a6a6 45%, #b4b4b4); border: solid #999; border-width: 0 2px; }
.tool.dim, .faded { opacity: .55; }
.dimmed { opacity: .6; }
.more { width: 38px; }
.more svg { width: 22px; height: 16px; margin: 0 auto; }
.grip {
  width: 11px;
  height: 48px;
  margin-left: 14px;
  background:
    radial-gradient(circle at 2px 2px, #fafafa 2px, transparent 3px) 0 0 / 12px 11px,
    radial-gradient(circle at 8px 7px, #bdbdbd 2px, transparent 3px) 0 0 / 12px 11px;
}
.grip:first-child { margin-left: 0; }
.grip.tight { margin-left: 5px; }

.glyph-ratio { font: bold 20px "Liberation Sans", sans-serif; fill: #3a4246; }
.glyph-i { font: italic bold 34px "Liberation Serif", serif; fill: #fff; }
.glyph-eps { font: 60px "Liberation Serif", serif; fill: #6f2f82; }
.glyph-eps-small { font: 44px "Liberation Serif", serif; fill: #b08cb8; }
.glyph-sum { font: bold 58px "Liberation Serif", serif; fill: #8d0082; }
.glyph-help { font: 34px "Liberation Serif", serif; fill: #fff; }
.glyph-q { font: bold 16px "Liberation Sans", sans-serif; fill: #e4eeff; }

/* Workspace */
.workspace { flex: 1; display: flex; min-height: 0; }
.rail {
  flex: none;
  display: flex;
  flex-direction: column;
  align-items: center;
  gap: 28px;
  width: 88px;
  padding: 12px 8px 0 2px;
  border-right: 2px solid #b0b0b0;
  background: linear-gradient(90deg, #ececec, #c6c6c6);
  overflow: hidden;
}
.grip-wide {
  flex: none;
  width: 72px;
  height: 12px;
  margin-bottom: -20px;
  background:
    radial-gradient(circle at 2px 2px, #fafafa 2px, transparent 3px) 0 0 / 12px 12px,
    radial-gradient(circle at 8px 8px, #f2f2f2 2px, transparent 3px) 0 0 / 12px 12px;
}
.rail-tool { flex: none; width: 48px; height: 48px; }
.rail-tool svg { width: 48px; height: 48px; }

.layers { flex: none; display: flex; flex-direction: column; width: 492px; border-right: 2px solid #999; background: #ececec; }
.layers-head {
  display: flex;
  align-items: center;
  gap: 12px;
  height: 52px;
  padding: 0 8px 2px 6px;
  border-top: 2px solid #fff;
  border-bottom: 2px solid #b0b0b0;
  background: linear-gradient(#ececec, #cacaca);
}
.round svg { width: 28px; height: 28px; }
.layers-head h2 { flex: 1; font-size: 22px; text-align: center; }
.layers-tools {
  display: flex;
  align-items: center;
  gap: 28px;
  height: 56px;
  padding: 0 0 2px 13px;
  border-top: 2px solid #fff;
  border-bottom: 2px solid #b0b0b0;
  background: linear-gradient(#ececec, #c6c6c6);
}
.layers-tools svg { width: 32px; height: 32px; overflow: visible; }
.layers-tools .wide { margin-left: 14px; }
.layers-tools .wide svg { width: 52px; }
.layers-tools .wide + button { margin-left: -9px; }
.tree { flex: 1; margin-top: 20px; border: solid #b0b0b0; border-width: 2px 2px 0 1px; border-top-color: #909090; background: #fff; list-style: none; font-weight: bold; }
.tree li { padding-left: 55px; }
.tree label { display: flex; align-items: center; height: 40px; }
.tree .selected { background: #d0d0d0; }
.layer-icon { width: 32px; height: 32px; margin: 0 12px 0 26px; }
.soft { opacity: .8; }
.underlined { text-decoration: underline; text-decoration-thickness: 2px; }
.check { flex: none; appearance: none; width: 28px; height: 28px; margin: 0; border: 2px solid #c4c4c4; border-radius: 5px; background: #fcfcfc; }
.selected .check { background: #e9e9e9; border-color: #b0b0b0; }
.check:checked::after { content: ""; display: block; width: 8px; height: 16px; margin: 1px 0 0 8px; border: solid #8c8c8c; border-width: 0 3px 3px 0; transform: rotate(35deg); }

.map { flex: 1; border-top: 2px solid #888; border-left: 2px solid #b0b0b0; background: #b0d1cf; }

/* Layer properties */
.dialog-body { position: relative; flex: 1; display: flex; min-height: 0; }
.tabs { flex: none; width: 300px; background: #5b5b5b; }
.tab { display: flex; align-items: center; gap: 16px; width: 100%; height: 72px; padding: 0 0 2px 14px; color: #fff; text-shadow: 0 0 1px #fff, 0 0 1px #fff; }
.tab svg { width: 48px; height: 48px; }
.tab.current { gap: 22px; padding-left: 18px; background: #ececec; color: #000; text-shadow: none; }
.tab.current svg { width: 52px; }
.splitter { position: absolute; left: 300px; bottom: 2px; width: 14px; height: 20px; border-radius: 2px; background: radial-gradient(circle, #e4e4e4 2px, #b0b0b0 4px, #b0b0b0 5px, #fafafa 6px); }

.page {
  flex: 1;
  display: grid;
  grid-template-columns: 1fr 1fr;
  grid-template-rows: auto 1fr;
  column-gap: 32px;
  row-gap: 18px;
  min-width: 0;
  padding: 0 30px 0 38px;
  overflow: hidden;
}
.group { display: flex; flex-direction: column; min-width: 0; }
.custom { grid-column: 1 / -1; }
.group h3 { display: flex; flex: none; align-items: center; gap: 15px; height: 42px; padding: 0 0 2px 5px; font-weight: bold; color: #1c1c1c; }
.group h3 svg { width: 24px; height: 16px; margin-top: 6px; }
.box { height: 154px; padding: 0 24px; border: 2px solid #bababa; border-radius: 10px; background: #e4e4e4; }
.slider { display: block; appearance: none; width: 100%; height: 34px; margin: 28px 0 0; background: linear-gradient(#cacaca, #cacaca) 0 12px / 100% 6px no-repeat; }
.slider::-webkit-slider-thumb { appearance: none; width: 32px; height: 34px; border: 2px solid #d0d0d0; border-radius: 50%; background: #fcfcfc; }
.scale { display: flex; justify-content: space-between; margin-top: 21px; }
.line { display: flex; align-items: center; }
.nodata .line:first-child { height: 30px; margin-top: 26px; gap: 8px; padding-left: 3px; }
.muted { color: #868686; }
.undefined { margin-left: 6px; color: #3c3c3c; }
.extra { gap: 16px; margin-top: 28px; }
.extra label { padding-bottom: 2px; }
.field { flex: 1; min-width: 0; height: 42px; padding: 0 6px; border: 2px solid #bbb; background: #fff; font: inherit; }

.options { flex: 1; padding-top: 28px; border-bottom: 0; border-radius: 10px 10px 0 0; }
.band { gap: 18px; height: 42px; padding-right: 77px; }
.band label { padding-bottom: 8px; }
.select { position: relative; flex: 1; height: 42px; }
.select select { appearance: none; display: block; width: 100%; height: 42px; border: 2px solid #bdbdbd; border-bottom-color: #a6a6a6; border-radius: 8px; background: #fff; font: inherit; }
.select svg { position: absolute; top: 0; right: 0; width: 34px; height: 42px; border-radius: 0 8px 8px 0; background: linear-gradient(#d8d8d8, #c8c8c8); pointer-events: none; }
.options h4 { margin: 21px 0; }
.list { display: flex; gap: 20px; align-items: flex-start; }
.frame { flex: 1; height: 240px; border: 2px solid #b5b5b5; border-top-color: #8c8c8c; background: #fff; }
.frame table { width: 100%; table-layout: fixed; border-collapse: collapse; }
.frame th { height: 42px; padding: 2px 0 6px; border-bottom: 2px solid #d6d6d6; font-weight: normal; }
.frame th span { display: block; border-right: 2px solid #e0e0e0; }
.frame th:last-child span { border-right: 0; }
.red { width: 66px; }
.green { width: 92px; }
.blue { width: 74px; }
.actions { display: flex; flex-direction: column; gap: 16px; padding: 12px 0 0; }
.actions button { display: flex; align-items: center; justify-content: center; width: 52px; height: 52px; border: 2px solid #c6c6c6; background: linear-gradient(#e2e2e2, #ececec); }
.actions svg { width: 28px; height: 28px; }
```
